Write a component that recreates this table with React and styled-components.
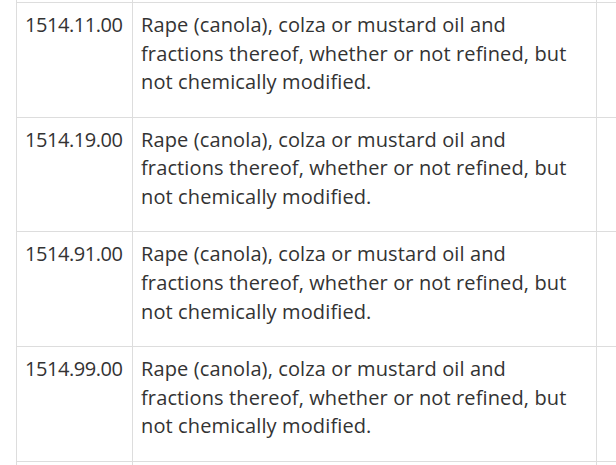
import React from "react";
import styled, { createGlobalStyle } from "styled-components";

const GlobalStyle = createGlobalStyle`
  html, body {
    margin: 0;
    padding: 0;
    background: #fff;
    overflow: hidden;
  }
  body {
    font-family: "Open Sans", "Liberation Sans", sans-serif;
    color: #333;
  }
`;

const Page = styled.div`
  padding-left: 16px;
  width: 720px;
`;

const Table = styled.table`
  border-collapse: collapse;
  table-layout: fixed;
  width: 680px;
  font-size: 20px;
  line-height: 1.42857143;
`;

const Cell = styled.td`
  border: 1px solid #ddd;
  vertical-align: top;
  padding: 8px ${(p) => (p.$wide ? "24px" : "8px")} 8px 8px;
  white-space: ${(p) => (p.$nowrap ? "nowrap" : "normal")};
  letter-spacing: ${(p) => (p.$nowrap ? "-0.45px" : "normal")};
`;

const SpacerCell = styled.td`
  border-left: 1px solid #ddd;
  border-right: 1px solid #ddd;
  padding: 0;
  height: 2px;
`;

const Desc = styled.p`
  margin: 0 0 12px;
  letter-spacing: 0.12px;
`;

const rows = ["1514.11.00", "1514.19.00", "1514.91.00", "1514.99.00"];

const desc =
  "Rape (canola), colza or mustard oil and fractions thereof, whether or not refined, but not chemically modified.";

export default function App() {
  return (
    <>
      <GlobalStyle />
      <Page>
        <Table>
          <colgroup>
            <col style={{ width: 116 }} />
            <col style={{ width: 464 }} />
            <col style={{ width: 100 }} />
          </colgroup>
          <tbody>
            <tr>
              <SpacerCell />
              <SpacerCell />
              <SpacerCell />
            </tr>
            {rows.map((code) => (
              <tr key={code}>
                <Cell $nowrap>{code}</Cell>
                <Cell $wide>
                  <Desc>{desc}</Desc>
                </Cell>
                <Cell />
              </tr>
            ))}
            <tr>
              <Cell>
                <Desc>&nbsp;</Desc>
              </Cell>
              <Cell $wide />
              <Cell />
            </tr>
          </tbody>
        </Table>
      </Page>
    </>
  );
}
